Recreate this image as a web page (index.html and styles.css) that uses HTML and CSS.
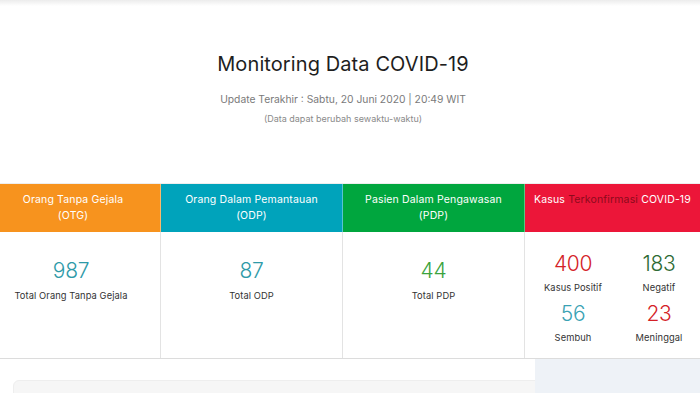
FILE: index.html
```html
<!DOCTYPE html>
<html>
<head>
<meta charset="utf-8">
<link rel="stylesheet" href="styles.css">
</head>
<body>
<div class="topshadow"></div>
<header class="intro">
  <h1 class="title">Monitoring Data COVID-19</h1>
  <p class="update">Update Terakhir : Sabtu, 20 Juni 2020 | 20:49 WIT</p>
  <p class="note">(Data dapat berubah sewaktu-waktu)</p>
</header>
<section class="table">
  <div class="head otg">Orang Tanpa Gejala<br>(OTG)</div>
  <div class="head odp">Orang Dalam Pemantauan<br>(ODP)</div>
  <div class="head pdp">Pasien Dalam Pengawasan<br>(PDP)</div>
  <div class="head kasus">Kasus <span class="dark">Terkonfirmasi</span> COVID-19</div>
  <div class="cell first">
    <div class="num teal">987</div>
    <div class="label">Total Orang Tanpa Gejala</div>
  </div>
  <div class="cell">
    <div class="num teal">87</div>
    <div class="label">Total ODP</div>
  </div>
  <div class="cell">
    <div class="num green">44</div>
    <div class="label">Total PDP</div>
  </div>
  <div class="cell last">
    <div class="quad">
      <div class="item"><div class="num red">400</div><div class="label">Kasus Positif</div></div>
      <div class="item"><div class="num dgreen">183</div><div class="label">Negatif</div></div>
      <div class="item"><div class="num teal2">56</div><div class="label">Sembuh</div></div>
      <div class="item"><div class="num red">23</div><div class="label">Meninggal</div></div>
    </div>
  </div>
</section>
<section class="bottom">
  <div class="card"></div>
  <div class="panel"></div>
</section>
</body>
</html>
```
FILE: styles.css
```css
* { box-sizing: border-box; }
html, body { margin: 0; padding: 0; background: #fff; }
body {
  width: 700px;
  height: 393px;
  overflow: hidden;
  font-family: "Inter", "Noto Sans", sans-serif;
  color: #333;
}
.topshadow {
  height: 6px;
  background: linear-gradient(#ececec, #fff);
}
.intro {
  text-align: center;
  padding: 45px 14px 0 0;
  height: 177px;
}
.title {
  margin: 0;
  font-size: 20px;
  font-weight: 400;
  line-height: 26px;
  color: #1e1e1e;
  letter-spacing: 0.1px;
}
.update {
  margin: 15px 0 0;
  font-size: 10.3px;
  line-height: 14px;
  color: #7a7a7a;
}
.note {
  margin: 7px 0 0;
  font-size: 9px;
  line-height: 12px;
  color: #8a8a8a;
}
.table {
  display: grid;
  grid-template-columns: 161px 182px 182px 1fr;
  grid-template-rows: 48px 126px;
  border-top: 1px solid #eee;
  border-bottom: 1px solid #dcdcdc;
}
.head {
  color: #fff;
  font-size: 10.5px;
  letter-spacing: 0.15px;
  line-height: 16px;
  text-align: center;
  padding-top: 8px;
  border-right: 1px solid rgba(255,255,255,0.35);
}
.otg { background: #f7931e; padding-right: 14px; }
.odp { background: #00a3bb; }
.pdp { background: #00a63e; }
.kasus { background: #ec1639; border-right: 0; }
.dark { color: #8c0a1c; }
.cell {
  text-align: center;
  border-right: 1px solid #e3e3e3;
  padding-top: 27px;
}
.cell.first { padding-right: 18px; }
.cell.last { border-right: 0; padding-top: 20px; }
.num {
  font-size: 21px;
  line-height: 24px;
  font-weight: 300;
  letter-spacing: -0.3px;
}
.label {
  font-size: 9.3px;
  line-height: 12px;
  color: #333;
  margin-top: 7px;
  letter-spacing: 0.1px;
}
.item .label { margin-top: 6px; }
.teal { color: #2e9aa8; }
.teal2 { color: #3aa2b4; }
.green { color: #3ba33d; }
.dgreen { color: #2e6b34; }
.red { color: #d42126; }
.quad {
  display: grid;
  grid-template-columns: 96px 76px;
  row-gap: 8px;
}
.item { text-align: center; }
.bottom {
  position: relative;
  height: 34px;
  overflow: hidden;
}
.card {
  margin: 21px 0 0 13px;
  height: 30px;
  background: #f6f6f6;
  border-radius: 6px;
  border: 1px solid #eeeeee;
}
.panel {
  position: absolute;
  left: 535px;
  top: 0;
  right: 0;
  bottom: 0;
  background: #eef2f7;
}
```
